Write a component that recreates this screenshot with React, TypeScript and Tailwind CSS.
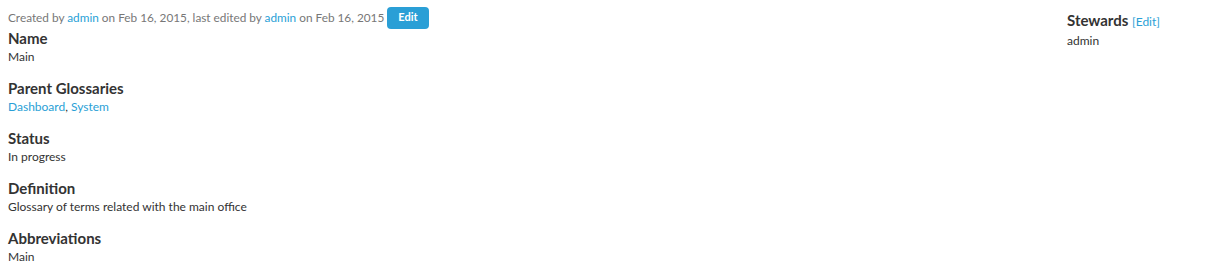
import React from 'react';

const Section: React.FC<{ title: string; children: React.ReactNode }> = ({ title, children }) => (
    <div className="mb-3">
        <h4 className="text-[15px] leading-[20px] font-bold text-[#333]">{title}</h4>
        <div className="text-[12px] leading-[18px] text-[#333]">{children}</div>
    </div>
);

const A: React.FC<{ children: React.ReactNode }> = ({ children }) => (
    <a href="#" className="text-[#2a9fd6] hover:underline">{children}</a>
);

export default function App() {
    return (
        <div className="flex w-[1217px] h-[271px] bg-white pl-2 overflow-hidden" style={{ fontFamily: 'Lato, "Open Sans", sans-serif' }}>
            <div className="flex-1">
                {/* meta line */}
                <div className="flex items-center gap-[3px] pt-[7px] h-[28px] text-[11.8px] text-[#777]">
                    <span>
                        Created by <A>admin</A> on Feb 16, 2015, last edited by <A>admin</A> on Feb 16, 2015
                    </span>
                    <button className="h-[22px] px-[11px] rounded-[4px] bg-[#2a9fd6] text-white text-[11px] font-bold">Edit</button>
                </div>
                <Section title="Name">Main</Section>
                <Section title="Parent Glossaries">
                    <A>Dashboard</A>, <A>System</A>
                </Section>
                <Section title="Status">In progress</Section>
                <Section title="Definition">Glossary of terms related with the main office</Section>
                <Section title="Abbreviations">Main</Section>
            </div>
            <div className="w-[150px] pt-[10px]">
                <h4 className="text-[15px] leading-[20px] font-bold text-[#333]">
                    Stewards <a href="#" className="text-[12px] font-normal text-[#2a9fd6]">[Edit]</a>
                </h4>
                <div className="text-[12px] leading-[18px] text-[#333]">admin</div>
            </div>
        </div>
    );
}
